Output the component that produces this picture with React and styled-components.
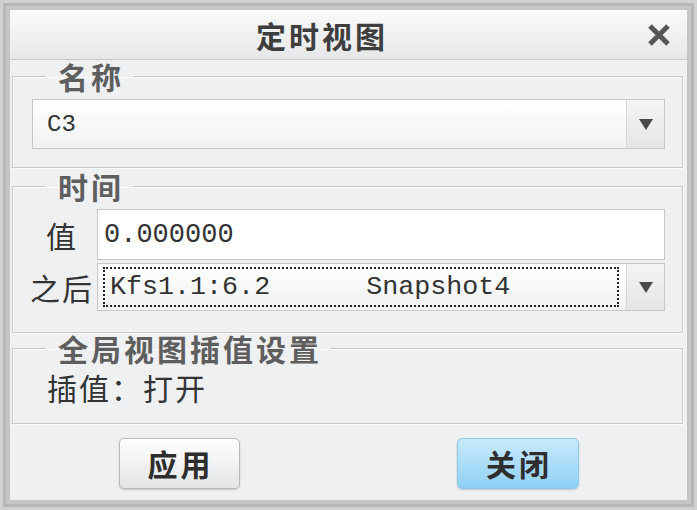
import React from "react";
import styled, { createGlobalStyle } from "styled-components";

const GlobalStyle = createGlobalStyle`
  html, body {
    margin: 0;
    padding: 0;
    background: #c3c3c3;
  }
  body {
    font-family: "Noto Sans CJK SC", "Liberation Sans", sans-serif;
  }
`;

const cjk = `"Noto Sans CJK SC", "Liberation Sans", sans-serif`;
const mono = `"Liberation Mono", "DejaVu Sans Mono", monospace`;

const Frame = styled.div`
  box-sizing: border-box;
  width: 697px;
  height: 510px;
  padding: 10px;
  background: #c4c5c6;
  box-shadow: inset 0 0 0 3px #cfd0d1, inset 0 0 0 6px #b6b7b8;
`;

const Dialog = styled.div`
  height: 100%;
  display: flex;
  flex-direction: column;
  background: #eff0f2;
`;

const TitleBar = styled.div`
  box-sizing: border-box;
  height: 50px;
  display: flex;
  align-items: center;
  background: linear-gradient(#fafafa, #e6e7e9);
  border-bottom: 1px solid #c7c8ca;
`;

const Title = styled.h1`
  flex: 1;
  margin: 0;
  padding-left: 4px;
  text-align: center;
  font: 700 30px/1 ${cjk};
  letter-spacing: 3px;
  color: #3e3e3e;
`;

const Close = styled.button`
  width: 57px;
  height: 100%;
  padding: 0;
  border: 0;
  background: none;
  display: flex;
  align-items: center;
  justify-content: center;
`;

const Body = styled.div`
  padding: 0 4px 0 2px;
`;

const Group = styled.fieldset`
  margin: ${(p) => p.$top}px 0 0;
  padding: ${(p) => p.$pad};
  min-width: 0;
  border: 1px solid #c8c9cb;
  box-shadow: inset 1px 1px 0 #fbfbfc, 1px 1px 0 #fbfbfc;
`;

const Legend = styled.legend`
  margin-left: ${(p) => p.$offset}px;
  padding: 0 9px 0 13px;
  font: 700 30px/${(p) => p.$lh || 32}px ${cjk};
  letter-spacing: 3px;
  color: #5e5e5e;
`;

const Combo = styled.div`
  box-sizing: border-box;
  display: flex;
  height: ${(p) => p.$h}px;
  border: 1px solid #c6c7c9;
  background: linear-gradient(#ffffff, #f0f1f2);
`;

const ComboText = styled.div`
  flex: 1;
  display: flex;
  align-items: center;
  padding-left: 14px;
  font: 24px ${mono};
  color: #333;
`;

const Focus = styled.div`
  flex: 1;
  display: flex;
  align-items: center;
  margin: 3px 7px 3px 5px;
  padding-left: 5px;
  border: 2px dotted #222;
  font: 26.7px ${mono};
  white-space: pre;
  color: #333;
`;

const DropButton = styled.div`
  width: 37px;
  display: flex;
  align-items: center;
  justify-content: center;
  border-left: 1px solid #d6d7d9;
  background: linear-gradient(#f4f4f5, #e4e5e7);
  &::after {
    content: "";
    border-left: 7px solid transparent;
    border-right: 7px solid transparent;
    border-top: 11px solid #4a4a4a;
  }
`;

const FieldGrid = styled.div`
  display: grid;
  grid-template-columns: 64px 1fr;
  column-gap: 3px;
  row-gap: 3px;
  align-items: center;
`;

const Label = styled.span`
  text-align: center;
  white-space: nowrap;
  font: 30px/32px ${cjk};
  letter-spacing: 2px;
  color: #333;
`;

const Input = styled.div`
  box-sizing: border-box;
  height: 51px;
  display: flex;
  align-items: center;
  padding-left: 6px;
  border: 1px solid #c6c7c9;
  background: #fff;
  font: 27px ${mono};
  color: #333;
`;

const Info = styled.div`
  font: 30px/30px ${cjk};
  letter-spacing: 2px;
  color: #333;
`;

const Footer = styled.div`
  flex: 1;
  display: flex;
  align-items: center;
  justify-content: space-around;
  padding-top: 2px;
`;

const Button = styled.button`
  box-sizing: border-box;
  width: ${(p) => p.$w}px;
  height: 51px;
  padding: 0 0 0 3px;
  border-radius: 5px;
  border: 1px solid ${(p) => (p.$primary ? "#8ec9ec" : "#b7b8ba")};
  background: ${(p) =>
    p.$primary
      ? "linear-gradient(#c8eafc, #8fd0f6)"
      : "linear-gradient(#ffffff, #e3e4e6)"};
  box-shadow: 0 1px 2px rgba(0, 0, 0, 0.18);
  font: 700 30px/1 ${cjk};
  letter-spacing: 3px;
  color: #2e2e2e;
`;

function CloseIcon() {
  return (
    <svg width="24" height="22" viewBox="0 0 24 22">
      <path d="M3 2 L21 20 M21 2 L3 20" stroke="#575757" strokeWidth="5" />
    </svg>
  );
}

export default function App() {
  return (
    <>
      <GlobalStyle />
      <Frame>
        <Dialog>
          <TitleBar>
            <Title>定时视图</Title>
            <Close>
              <CloseIcon />
            </Close>
          </TitleBar>
          <Body>
            <Group $top={0} $pad="7px 17px 18px 19px">
              <Legend $offset={13}>名称</Legend>
              <Combo $h={50}>
                <ComboText>C3</ComboText>
                <DropButton />
              </Combo>
            </Group>
            <Group $top={2} $pad="7px 17px 21px 17px">
              <Legend $offset={15}>时间</Legend>
              <FieldGrid>
                <Label>值</Label>
                <Input>0.000000</Input>
                <Label>之后</Label>
                <Combo $h={48}>
                  <Focus>{"Kfs1.1:6.2      Snapshot4"}</Focus>
                  <DropButton />
                </Combo>
              </FieldGrid>
            </Group>
            <Group $top={1} $pad="10px 17px 21px 34px">
              <Legend $offset={-2} $lh={28}>
                全局视图插值设置
              </Legend>
              <Info>插值：打开</Info>
            </Group>
          </Body>
          <Footer>
            <Button $w={121}>应用</Button>
            <Button $w={122} $primary>
              关闭
            </Button>
          </Footer>
        </Dialog>
      </Frame>
    </>
  );
}
